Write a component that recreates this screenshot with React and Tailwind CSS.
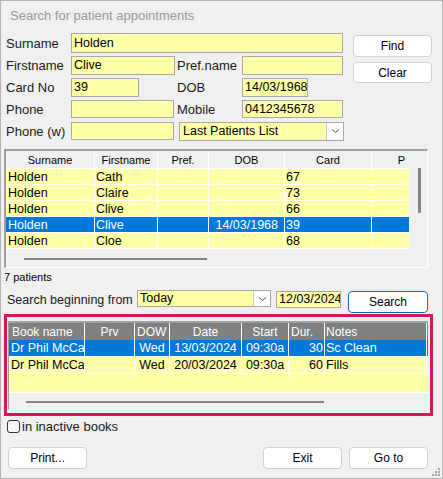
import React from "react";

const font = { fontFamily: '"Liberation Sans", Arial, sans-serif' };

const Field = ({ w, value = "", h = "h-[19px]" }) => (
  <div
    className={`${w} ${h} bg-[#ffffa8] border border-[#a8a8a8] text-[12.5px] leading-none flex items-center pl-[2px] text-black overflow-hidden whitespace-nowrap`}
  >
    {value}
  </div>
);

const Label = ({ w = "w-[65px]", children }) => (
  <div className={`${w} text-[13px] text-[#1a1a1a] leading-none shrink-0 whitespace-nowrap`}>{children}</div>
);

const Btn = ({ w = "w-[79px]", h = "h-[22px]", children, primary }) => (
  <button
    className={`${w} ${h} bg-white rounded-[4px] border ${
      primary ? "border-[#0067c0]" : "border-[#d0d0d0]"
    } text-[12px] text-black leading-none flex items-center justify-center`}
  >
    {children}
  </button>
);

const Chevron = () => (
  <div className="w-[17px] h-full bg-white border-l border-[#c8c8c8] flex items-center justify-center shrink-0">
    <svg width="9" height="6" viewBox="0 0 9 6">
      <path d="M1 1.5 L4.5 4.5 L8 1.5" fill="none" stroke="#555" strokeWidth="1" />
    </svg>
  </div>
);

const patientCols = [
  { name: "Surname", w: "w-[89px]" },
  { name: "Firstname", w: "w-[63px]" },
  { name: "Pref.", w: "w-[51px]" },
  { name: "DOB", w: "w-[76px]" },
  { name: "Card", w: "w-[87px]" },
  { name: "P", w: "w-[60px]" },
];

const patients = [
  ["Holden", "Cath", "", "", "67"],
  ["Holden", "Claire", "", "", "73"],
  ["Holden", "Clive", "", "", "66"],
  ["Holden", "Clive", "", "14/03/1968", "39", true],
  ["Holden", "Cloe", "", "", "68"],
];

const apptCols = [
  { name: "Book name", w: "w-[76px]", al: "justify-start pl-[3px]" },
  { name: "Prv", w: "w-[50px]", al: "justify-center" },
  { name: "DOW", w: "w-[35px]", al: "justify-start pl-[2px]" },
  { name: "Date", w: "w-[72px]", al: "justify-center" },
  { name: "Start", w: "w-[47px]", al: "justify-center" },
  { name: "Dur.", w: "w-[36px]", al: "justify-start pl-[2px]" },
  { name: "Notes", w: "w-[102px]", al: "justify-start pl-[1px]" },
];

const appts = [
  ["Dr Phil McCaw", "", "Wed", "13/03/2024", "09:30a", "30", "Sc Clean", true],
  ["Dr Phil McCaw", "", "Wed", "20/03/2024", "09:30a", "60", "Fills"],
];

const apptAlign = [
  "justify-start pl-[2px]",
  "justify-center",
  "justify-center",
  "justify-center",
  "justify-center",
  "justify-end pr-[1px]",
  "justify-start pl-[1px]",
];

export default function App() {
  return (
    <div
      style={font}
      className="relative w-[443px] h-[479px] bg-[#f0f0f0] border border-[#b4b4b4] overflow-hidden select-none"
    >
      {/* TITLE */}
      <div className="h-[32px] pl-[9px] pt-[8px] text-[13px] leading-none text-[#9a9a9a]">
        Search for patient appointments
      </div>

      {/* FORM */}
      <div className="flex pl-[5px]">
        <div className="w-[339px]">
          <div className="flex items-center h-[20px]">
            <Label>Surname</Label>
            <Field w="w-[272px]" h="h-[20px]" value="Holden" />
          </div>
          <div className="flex items-center h-[19px] mt-[3px]">
            <Label>Firstname</Label>
            <Field w="w-[104px]" value="Clive" />
            <div className="w-[2px]" />
            <Label>Pref.name</Label>
            <Field w="w-[101px]" />
          </div>
          <div className="flex items-center h-[19px] mt-[3px]">
            <Label>Card No</Label>
            <Field w="w-[68px]" value="39" />
            <div className="w-[38px]" />
            <Label>DOB</Label>
            <Field w="w-[66px]" value="14/03/1968" />
          </div>
          <div className="flex items-center h-[18px] mt-[3px]">
            <Label>Phone</Label>
            <Field w="w-[103px]" h="h-[18px]" />
            <div className="w-[3px]" />
            <Label>Mobile</Label>
            <Field w="w-[101px]" h="h-[18px]" value="0412345678" />
          </div>
          <div className="flex items-center h-[18px] mt-[4px]">
            <Label>Phone (w)</Label>
            <Field w="w-[103px]" h="h-[18px]" />
            <div className="w-[5px]" />
            <div className="w-[165px] h-[19px] bg-[#ffffa8] border border-[#a8a8a8] flex items-stretch">
              <div className="flex-1 text-[12.5px] leading-none flex items-center pl-[3px] text-black">
                Last Patients List
              </div>
              <Chevron />
            </div>
          </div>
        </div>
        <div className="ml-[8px] pt-[2px] flex flex-col gap-[5px]">
          <Btn>Find</Btn>
          <Btn h="h-[21px]">Clear</Btn>
        </div>
      </div>

      {/* PATIENT GRID */}
      <div className="relative ml-[3px] mt-[9px] w-[424px] h-[119px] border-t-2 border-l-2 border-t-[#a0a0a0] border-l-[#a0a0a0] border-r border-b border-r-white border-b-white pt-[1px]">
        <div className="w-[403px] overflow-hidden">
          <div className="flex h-[16px] w-max">
            {patientCols.map((c) => (
              <div
                key={c.name}
                className={`${c.w} shrink-0 border-r border-white text-[11px] leading-none text-black flex items-center justify-center`}
              >
                {c.name}
              </div>
            ))}
          </div>
          {patients.map((p, i) => {
            const sel = p[5];
            return (
              <div
                key={i}
                className={`flex h-[16px] w-max border-t border-white ${
                  sel ? "bg-[#0078d7] text-white" : "bg-[#ffffa8] text-black"
                }`}
              >
                <div className="w-[89px] shrink-0 border-r border-white text-[12.5px] leading-none flex items-center pl-[2px] pt-[1px]">
                  {p[0]}
                </div>
                <div className="w-[63px] shrink-0 border-r border-white text-[12.5px] leading-none flex items-center pl-[1px] pt-[1px]">
                  {p[1]}
                </div>
                <div className="w-[51px] shrink-0 border-r border-white" />
                <div className="w-[76px] shrink-0 border-r border-white text-[12.5px] leading-none flex items-center justify-end pr-[6px] pt-[1px]">
                  {p[3]}
                </div>
                <div className="w-[87px] shrink-0 border-r border-white text-[12.5px] leading-none flex items-center pl-[1px] pt-[1px]">
                  {p[4]}
                </div>
                <div className="w-[60px] shrink-0" />
              </div>
            );
          })}
          <div className="h-[1px] bg-white w-[403px]" />
        </div>
        <div className="ml-[18px] mt-[9px] w-[183px] h-[2px] bg-[#858585]" />
        {/* vertical scroll thumb */}
        <div className="absolute left-[412px] top-[17px] w-[3px] h-[45px] bg-[#858585]" />
      </div>

      <div className="ml-[3px] mt-[2px] text-[11px] leading-[14px] text-black">7 patients</div>

      {/* SEARCH ROW */}
      <div className="flex items-start pl-[6px] mt-[6px] h-[23px]">
        <div className="w-[130px] shrink-0 pt-[4px] text-[12.5px] leading-none text-[#1a1a1a] whitespace-nowrap">
          Search beginning from
        </div>
        <div className="w-[134px] h-[17px] bg-[#ffffa8] border border-[#a8a8a8] flex items-stretch">
          <div className="flex-1 text-[12.5px] leading-none flex items-center pl-[2px] text-black">
            Today
          </div>
          <Chevron />
        </div>
        <div className="ml-[5px] mt-[1px]">
          <Field w="w-[65px]" h="h-[17px]" value="12/03/2024" />
        </div>
        <div className="ml-[7px] mt-[1px]">
          <Btn w="w-[80px]" primary>
            Search
          </Btn>
        </div>
      </div>

      {/* APPOINTMENTS (highlighted) */}
      <div className="ml-[3px] mt-[1px] w-[429px] h-[102px] border-[3px] border-[#d6175b] pl-[1px] pt-[4px] pr-[2px]">
        <div className="w-[420px] h-[89px] border-t-2 border-l border-t-[#a0a0a0] border-l-[#a0a0a0] border-b border-b-white">
          <div className="flex h-[17px] bg-[#808080]">
            {apptCols.map((c) => (
              <div
                key={c.name}
                className={`${c.w} shrink-0 border-r border-white text-[12px] leading-none text-white flex items-center ${c.al}`}
              >
                {c.name}
              </div>
            ))}
          </div>
          {appts.map((a, i) => {
            const sel = a[7];
            return (
              <div
                key={i}
                className={`flex ${i === 0 ? "h-[16px]" : "h-[17px] border-t border-white"} ${
                  sel ? "bg-[#0078d7] text-white" : "bg-[#ffffa8] text-black"
                }`}
              >
                {apptCols.map((c, j) => (
                  <div
                    key={c.name}
                    className={`${c.w} shrink-0 border-r border-white text-[12.5px] leading-none flex items-center overflow-hidden whitespace-nowrap ${apptAlign[j]}`}
                  >
                    {a[j]}
                  </div>
                ))}
              </div>
            );
          })}
          <div className="h-[19px] bg-[#ffffa8] border-t border-white" />
          <div className="h-[1px] bg-white" />
          <div className="ml-[17px] mt-[8px] w-[298px] h-[2px] bg-[#858585]" />
        </div>
      </div>

      {/* CHECKBOX */}
      <div className="flex items-center ml-[6px] mt-[3px] h-[14px]">
        <div className="w-[13px] h-[13px] rounded-[3px] border border-[#333] bg-[#f7f7f7]" />
        <div className="ml-[2px] text-[13px] leading-none text-[#1a1a1a]">in inactive books</div>
      </div>

      {/* BOTTOM BUTTONS */}
      <div className="flex mt-[14px] pl-[7px]">
        <Btn>Print...</Btn>
        <div className="ml-[176px]">
          <Btn>Exit</Btn>
        </div>
        <div className="ml-[7px]">
          <Btn>Go to</Btn>
        </div>
      </div>

      {/* RESIZE GRIP */}
      <svg className="absolute right-[1px] bottom-[1px]" width="10" height="10" viewBox="0 0 10 10">
        {[
          [8, 2],
          [5, 5],
          [8, 5],
          [2, 8],
          [5, 8],
          [8, 8],
        ].map(([x, y], i) => (
          <rect key={i} x={x - 1} y={y - 1} width="2" height="2" fill="#a8a8a8" />
        ))}
      </svg>
    </div>
  );
}
